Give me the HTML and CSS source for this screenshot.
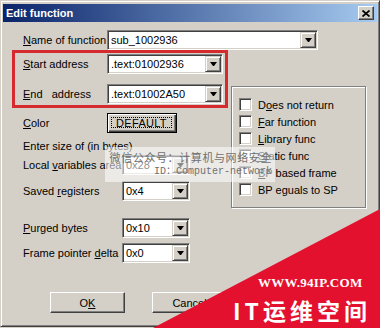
FILE: index.html
```html
<!DOCTYPE html>
<html lang="en">

<head>
    <meta charset="UTF-8">
    <title>Edit function</title>
    <link rel="stylesheet" href="styles.css">
</head>

<body>
    <div class="screen">
        <div class="window">
            <div class="titlebar">
                <span class="title">Edit function</span>
                <span class="close">
                    <svg width="8" height="7" viewBox="0 0 8 7">
                        <path d="M0.5 0.5 L7.5 6.5 M7.5 0.5 L0.5 6.5" stroke="#000" stroke-width="1.7" fill="none" />
                    </svg>
                </span>
            </div>

            <div class="client">
                <div class="row name-row">
                    <span class="lbl lbl-wide"><u>N</u>ame of function</span>
                    <div class="combo combo-name"><span class="val">sub_1002936</span><span class="drop"></span></div>
                </div>

                <div class="main">
                    <div class="left">
                        <div class="highlight">
                            <div class="row">
                                <span class="lbl lbl-wide"><u>S</u>tart address</span>
                                <div class="combo combo-addr"><span class="val">.text:01002936</span><span class="drop"></span></div>
                            </div>
                            <div class="row row-gap">
                                <span class="lbl lbl-wide"><u>E</u>nd&nbsp;&nbsp;&nbsp;address</span>
                                <div class="combo combo-addr"><span class="val">.text:01002A50</span><span class="drop"></span></div>
                            </div>
                        </div>

                        <div class="row field color-row">
                            <span class="lbl lbl-wide"><u>C</u>olor</span>
                            <div class="btn btn-default"><span class="focus">DEFAULT</span></div>
                        </div>

                        <div class="field size-text">Enter size of (in bytes)</div>
                        <div class="row field local-row">
                            <span class="lbl">Local <u>v</u>ariables area</span>
                            <div class="combo combo-small"><span class="val">0x28</span><span class="drop"></span></div>
                        </div>
                        <div class="row field saved-row">
                            <span class="lbl">Saved <u>r</u>egisters</span>
                            <div class="combo combo-small"><span class="val">0x4</span><span class="drop"></span></div>
                        </div>
                        <div class="row field purged-row">
                            <span class="lbl"><u>P</u>urged bytes</span>
                            <div class="combo combo-small"><span class="val">0x10</span><span class="drop"></span></div>
                        </div>
                        <div class="row field delta-row">
                            <span class="lbl">Frame pointer <u>d</u>elta</span>
                            <div class="combo combo-small"><span class="val">0x0</span><span class="drop"></span></div>
                        </div>
                    </div>

                    <div class="group">
                        <div class="check"><span class="box"></span><span>D<u>o</u>es not return</span></div>
                        <div class="check"><span class="box"></span><span><u>F</u>ar function</span></div>
                        <div class="check"><span class="box"></span><span><u>L</u>ibrary func</span></div>
                        <div class="check"><span class="box"></span><span><u>S</u>tatic func</span></div>
                        <div class="check"><span class="box"></span><span><u>B</u>P based frame</span></div>
                        <div class="check"><span class="box"></span><span>BP eguals to SP</span></div>
                    </div>
                </div>

                <div class="buttons">
                    <div class="btn"><span>O<u>K</u></span></div>
                    <div class="btn"><span>Cancel</span></div>
                </div>
            </div>
        </div>

        <div class="watermark">
            <div class="wm-line1">微信公众号：计算机与网络安全</div>
            <div class="wm-line2">ID：Computer-network</div>
        </div>

        <div class="promo">
            <div class="site">WWW.94IP.COM</div>
            <div class="brand">IT运维空间</div>
        </div>
    </div>
</body>

</html>
```

FILE: styles.css
```css
body {
    margin: 0;
    font-family: "Liberation Sans", Arial, sans-serif;
    font-size: 11px;
    color: #000;
}

.screen {
    position: relative;
    width: 380px;
    height: 328px;
    overflow: hidden;
    background: #d4d0c8;
}

.window {
    box-sizing: border-box;
    width: 380px;
    height: 327px;
    background: #d4d0c8;
    border: 1px solid;
    border-color: #d4d0c8 #404040 #404040 #d4d0c8;
    box-shadow: inset 1px 1px #fff, inset -1px -1px #808080;
    padding: 3px 2px 0 2px;
}

.titlebar {
    height: 18px;
    display: flex;
    align-items: center;
    justify-content: space-between;
    padding: 0 3px 0 3px;
    background: linear-gradient(to right, #0a246a, #a6caf0);
}

.title {
    color: #fff;
    font-weight: bold;
    font-size: 11px;
}

.close {
    box-sizing: border-box;
    width: 16px;
    height: 14px;
    display: flex;
    align-items: center;
    justify-content: center;
    background: #d4d0c8;
    border: 1px solid;
    border-color: #fff #404040 #404040 #fff;
    box-shadow: inset -1px -1px #808080;
}

.client {
    padding: 8px 0 0 9px;
}

.row {
    display: flex;
    align-items: center;
    height: 20px;
}

.name-row {
    padding-left: 11px;
}

.lbl {
    width: 99px;
    white-space: nowrap;
}

.lbl-wide {
    width: 84px;
}

/* combo boxes */
.combo {
    box-sizing: border-box;
    display: flex;
    align-items: stretch;
    height: 20px;
    background: #fff;
    border: 1px solid;
    border-color: #808080 #fff #fff #808080;
    box-shadow: inset 1px 1px #404040, inset -1px -1px #d4d0c8;
    padding: 1px 1px 1px 3px;
}

.combo .val {
    flex: 1;
    line-height: 16px;
    white-space: nowrap;
}

.combo-name {
    width: 211px;
}

.combo-addr {
    width: 116px;
}

.combo-small {
    width: 68px;
}

.drop {
    box-sizing: border-box;
    width: 16px;
    display: flex;
    align-items: center;
    justify-content: center;
    background: #d4d0c8;
    border: 1px solid;
    border-color: #d4d0c8 #404040 #404040 #d4d0c8;
    box-shadow: inset 1px 1px #fff, inset -1px -1px #808080;
}

.drop::after {
    content: "";
    width: 1px;
    height: 0;
    border-top: 4px solid #000;
    border-left: 3px solid transparent;
    border-right: 3px solid transparent;
}

.main {
    display: flex;
    align-items: flex-start;
}

.left {
    width: 216px;
}

.highlight {
    box-sizing: border-box;
    width: 216px;
    border: 3px solid #d52a2e;
    padding: 1px 2px 1px 8px;
}

.row-gap {
    margin-top: 10px;
}

.field {
    padding-left: 11px;
}

.color-row {
    margin-top: 5px;
}

.size-text {
    margin-top: 6px;
    line-height: 14px;
}

.local-row {
    margin-top: 2px;
}

.saved-row {
    margin-top: 6px;
}

.purged-row {
    margin-top: 17px;
}

.delta-row {
    margin-top: 5px;
}

/* buttons */
.btn {
    box-sizing: border-box;
    width: 75px;
    height: 21px;
    display: flex;
    align-items: center;
    justify-content: center;
    background: #d4d0c8;
    border: 1px solid;
    border-color: #fff #404040 #404040 #fff;
    box-shadow: inset -1px -1px #808080;
}

.btn-default {
    width: 70px;
    height: 20px;
    border-color: #000;
    box-shadow: inset 1px 1px #fff, inset -1px -1px #404040, inset -2px -2px #808080;
    padding: 3px 4px 4px 3px;
}

.btn-default .focus {
    flex: 1;
    align-self: stretch;
    display: flex;
    align-items: center;
    justify-content: center;
    border: 1px dotted #000;
    font-size: 11px;
    letter-spacing: 0.3px;
}

.buttons {
    display: flex;
    gap: 27px;
    margin-top: 29px;
    padding-left: 38px;
}

/* checkbox group */
.group {
    box-sizing: border-box;
    width: 135px;
    height: 122px;
    margin: 36px 0 0 3px;
    border: 1px solid #808080;
    box-shadow: inset 1px 1px #fff, 1px 1px #fff;
    padding: 9px 0 0 7px;
}

.check {
    display: flex;
    align-items: center;
    gap: 6px;
    height: 17px;
    white-space: nowrap;
}

.box {
    box-sizing: border-box;
    width: 13px;
    height: 13px;
    background: #fff;
    border: 1px solid;
    border-color: #808080 #fff #fff #808080;
    box-shadow: inset 1px 1px #404040, inset -1px -1px #d4d0c8;
}

/* overlays */
.watermark {
    position: absolute;
    left: 105px;
    top: 147px;
    box-sizing: border-box;
    width: 170px;
    height: 35px;
    padding: 3px 3px 0 0;
    background: rgba(255, 255, 255, 0.55);
    text-align: right;
    color: #707070;
}

.wm-line1 {
    font-family: "Noto Sans CJK SC", sans-serif;
    font-size: 11px;
    letter-spacing: 0.6px;
    line-height: 15px;
}

.wm-line2 {
    font-family: "Liberation Mono", "Noto Sans CJK SC", monospace;
    font-size: 10px;
    line-height: 14px;
}

.promo {
    position: absolute;
    left: 0;
    top: 0;
    width: 380px;
    height: 328px;
    background: #e3112e;
    clip-path: polygon(153px 328px, 380px 209px, 380px 328px);
    color: #fff;
}

.site {
    position: absolute;
    left: 258px;
    top: 276px;
    font-family: "Liberation Serif", serif;
    font-weight: bold;
    font-size: 13px;
    letter-spacing: 0.3px;
    line-height: 14px;
}

.brand {
    position: absolute;
    left: 233px;
    top: 297px;
    font-family: "Noto Sans CJK SC", sans-serif;
    font-weight: bold;
    font-size: 23px;
    letter-spacing: 4px;
    line-height: 26px;
    white-space: nowrap;
}
```
